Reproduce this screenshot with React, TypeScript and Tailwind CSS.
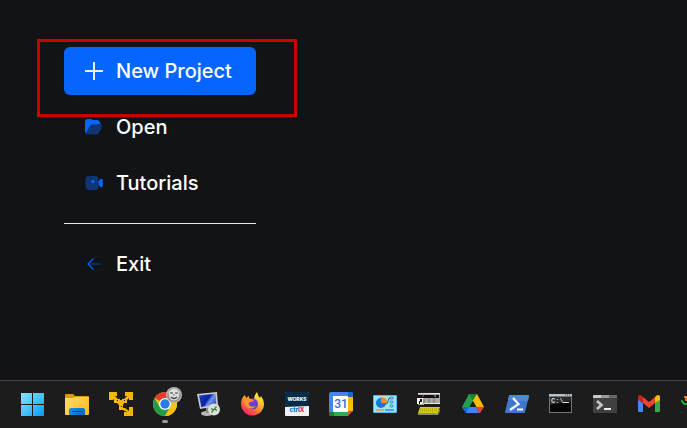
import React from "react";

const iconClass = "size-5 shrink-0";
const appIconClass = "size-6 overflow-visible";

const IconPlus = () => (
  <svg viewBox="0 0 20 20" className={iconClass} fill="none" stroke="#e6f0ff" strokeWidth="2" aria-hidden="true">
    <path d="M1 10h18M10 1v18" />
  </svg>
);

const IconFolder = () => (
  <svg viewBox="0 0 20 20" className={iconClass} aria-hidden="true">
    <path d="M1 5Q1 2 4 2H6.500Q8 2 9 3H13Q16 3 16.500 7.500L9 8L3 17Q1 16 1 14Z" fill="#0566ff" />
    <path d="M8.500 7.500H16.500Q19 7.500 18 10L15.500 15Q14.500 17.500 12 17.500H4Q1.500 17.500 2.500 15L5.500 9.500Q6.500 7.500 8.500 7.500Z" fill="#0f3575" />
  </svg>
);

const IconVideo = () => (
  <svg viewBox="0 0 20 20" className={iconClass} aria-hidden="true">
    <rect x="1.500" y="3" width="13" height="14" rx="3.500" fill="#0f3575" />
    <circle cx="9" cy="8.500" r="1.700" fill="#0566ff" />
    <path d="M14.500 8.200L16.500 6Q18.800 5 18.800 7.500V12.500Q18.800 15 16.500 14L14.500 11.800Z" fill="#0566ff" />
  </svg>
);

const IconArrow = () => (
  <svg viewBox="0 0 20 20" className={iconClass} fill="none" strokeLinecap="round" strokeLinejoin="round" aria-hidden="true">
    <path d="M4.500 10H15.500" stroke="#0b48ad" strokeWidth="1.200" />
    <path d="M9 5l-5 5 5 5" stroke="#0566ff" strokeWidth="1.200" />
  </svg>
);

const StartIcon = () => (
  <svg viewBox="0 0 24 24" className={appIconClass} aria-hidden="true">
    <defs>
      <linearGradient id="start" x1="0" y1="0" x2="24" y2="24" gradientUnits="userSpaceOnUse">
        <stop stopColor="#8fe3ff" />
        <stop offset="0.500" stopColor="#45c5fb" />
        <stop offset="1" stopColor="#0894f5" />
      </linearGradient>
    </defs>
    <path d="M0 1h11v11H0zM12 1h11v11H12zM0 13h11v11H0zM12 13h11v11H12z" fill="url(#start)" />
  </svg>
);

const ExplorerIcon = () => (
  <svg viewBox="0 0 24 24" className={appIconClass} aria-hidden="true">
    <defs>
      <linearGradient id="folder" x1="0" y1="4" x2="24" y2="23" gradientUnits="userSpaceOnUse">
        <stop stopColor="#ffdc74" />
        <stop offset="1" stopColor="#fdb916" />
      </linearGradient>
      <linearGradient id="tray" x1="4" y1="16" x2="20" y2="23" gradientUnits="userSpaceOnUse">
        <stop stopColor="#1a92e4" />
        <stop offset="1" stopColor="#0767bd" />
      </linearGradient>
    </defs>
    <path d="M0 3q0-1 1-1h7l2 2h13q1 0 1 1v4H0z" fill="#d99a0c" />
    <path d="M0 6h8l2-1h14v17q0 1-1 1H1q-1 0-1-1z" fill="url(#folder)" />
    <path d="M4 23v-5q0-2 2-2h12q2 0 2 2v5z" fill="url(#tray)" />
    <path d="M7 19h10v1H7z" fill="#074a8d" />
  </svg>
);

const ArrowsIcon = () => (
  <svg viewBox="0 0 24 24" className={appIconClass} fill="#f5b50a" aria-hidden="true">
    <path d="M0 0h8v4H6l3 3h6l3-3h-2V0h8v8h-4V6l-2 2v3h-3l-1 2v3h2l4 3v-4h4v9h-9v-4h3l-4-2h-4v-5l-2-2H5V8L4 7v1H0z" />
    <path d="M11 6h2v2h-2zM8 8h1v1H8zM15 8h1v1h-1zM12 14h1v1h-1z" fill="#1c1c1c" />
  </svg>
);

const ChromeIcon = () => (
  <svg viewBox="0 0 24 24" className={appIconClass} aria-hidden="true">
    <circle cx="12" cy="12" r="12" fill="#fbc116" />
    <path d="M12 12L1.600 6A12 12 0 0 1 22.400 6H12z" fill="#e33b2e" />
    <path d="M1.600 6A12 12 0 0 0 12 24l5.200-9L12 12 6.800 15z" fill="#229c4b" />
    <path d="M12 6h10.400A12 12 0 0 1 12 24l5.200-9z" fill="#fbc116" />
    <circle cx="12" cy="12" r="6" fill="#fff" />
    <circle cx="12" cy="12" r="4.700" fill="#267be8" />
    <circle cx="21" cy="3" r="8" fill="#b5b5b1" />
    <circle cx="21" cy="3" r="6.800" fill="#8f8f8b" />
    <path d="M15.500 0q5.500-7 11 0l-1 6q-4.500 5-9 0z" fill="#dededa" />
    <path d="M17 1h3M22 1h3M18 5q3 3 6 0" stroke="#3f3f3d" strokeWidth="1.200" fill="none" />
    <path d="M21 2v2" stroke="#777" />
    <rect x="9" y="28" width="6" height="3" rx="1.500" fill="#9b9b9b" />
  </svg>
);

const RemoteIcon = () => (
  <svg viewBox="0 0 24 24" className={appIconClass} aria-hidden="true">
    <defs>
      <linearGradient id="screen" x1="3" y1="3" x2="19" y2="14" gradientUnits="userSpaceOnUse">
        <stop stopColor="#173fc0" />
        <stop offset="0.450" stopColor="#0a20a0" />
        <stop offset="0.600" stopColor="#7095ed" />
        <stop offset="1" stopColor="#1740c4" />
      </linearGradient>
    </defs>
    <ellipse cx="10" cy="21.500" rx="6" ry="2.500" fill="#b9bbb8" />
    <path d="M9 15h5v6H9z" fill="#8b8d8b" />
    <path d="M0 2L20 0l1 14L3 17z" fill="#c6cac9" />
    <path d="M2 3.500L18.500 1.700l.7 11L4.300 15z" fill="url(#screen)" />
    <circle cx="17" cy="17.500" r="6" fill="#deded9" />
    <path d="M14 16.500l2.500 1.500-2 2.500M19.500 14.500l-2 2.500 2.500 1.500" stroke="#37854a" strokeWidth="1.400" fill="none" />
  </svg>
);

const FirefoxIcon = () => (
  <svg viewBox="0 0 24 24" className={appIconClass} aria-hidden="true">
    <defs>
      <linearGradient id="fire" x1="19" y1="2" x2="5" y2="22" gradientUnits="userSpaceOnUse">
        <stop stopColor="#fff044" />
        <stop offset="0.400" stopColor="#ffb02a" />
        <stop offset="0.700" stopColor="#ff6737" />
        <stop offset="1" stopColor="#f52269" />
      </linearGradient>
      <linearGradient id="globe" x1="8" y1="6" x2="15" y2="17" gradientUnits="userSpaceOnUse">
        <stop stopColor="#8a3fdc" />
        <stop offset="1" stopColor="#5741be" />
      </linearGradient>
    </defs>
    <path d="M4 3l1 3 3-2v3h5q0-4 3-7 1 4 3 6l1-2q3 4 3 8a11.500 11.500 0 0 1-23 0Q0 6 4 3z" fill="url(#fire)" />
    <circle cx="11.500" cy="12" r="5.500" fill="url(#globe)" />
    <path d="M3 7q4-2 7 0l3 1q-1 2-4 2-2 1-1 3 2 3 7 1-4 5-9 1-4-3-3-8z" fill="#ff9330" />
  </svg>
);

const WorksIcon = () => (
  <svg viewBox="0 0 24 24" className={appIconClass} fontFamily="Inter, sans-serif" fontWeight="800" textAnchor="middle">
    <rect width="24" height="24" rx="1" fill="#eef2f6" />
    <path d="M1 0h22q1 0 1 1v13L0 15V1q0-1 1-1z" fill="#052d4a" />
    <text x="12" y="9" fontSize="5" fill="#fff">WORKS</text>
    <text x="12" y="20" fontSize="6" fill="#1766a4">ctrl<tspan fill="#db3044">X</tspan></text>
  </svg>
);

const CalendarIcon = () => (
  <svg viewBox="0 0 24 24" className={appIconClass}>
    <path d="M2 0h20q2 0 2 2v18l-4 4H2q-2 0-2-2V2q0-2 2-2z" fill="#4285f4" />
    <path d="M19 0h3q2 0 2 2v3h-5z" fill="#1967d2" />
    <path d="M19 5h5v14h-5z" fill="#fbbc04" />
    <path d="M5 20h14v4H5z" fill="#34a853" />
    <path d="M0 20h5v4H2q-2 0-2-2z" fill="#188038" />
    <path d="M24 19h-5v5z" fill="#ea4335" />
    <path d="M24 19v5h-5z" fill="#1c1c1c" />
    <path d="M4 4h15v16H4z" fill="#fff" />
    <text x="12" y="16" fontSize="12" fontFamily="Roboto, sans-serif" fontWeight="500" textAnchor="middle" fill="#2b70dc">31</text>
  </svg>
);

const ControlPanelIcon = () => (
  <svg viewBox="0 0 24 24" className={appIconClass} aria-hidden="true">
    <rect y="3" width="24" height="18" rx="1" fill="#51b8e9" />
    <path d="M1 4h22v16H1z" fill="#9ee2fb" />
    <circle cx="8" cy="11" r="5" fill="#1679ca" />
    <path d="M8 11V5q6 0 6 6z" fill="#f58b19" />
    <path d="M13 12q2 0 2-3t3-3" stroke="#14649f" fill="none" />
    <g fill="#eefaff" stroke="#277cb9">
      <rect x="17" y="5" width="3" height="2" rx="1" />
      <rect x="17" y="9" width="3" height="2" rx="1" />
      <rect x="17" y="13" width="3" height="2" rx="1" />
    </g>
    <path d="M3 18h8" stroke="#f58b19" strokeWidth="1.200" />
    <path d="M12 18h9" stroke="#1679ca" strokeWidth="1.200" />
  </svg>
);

const ConsoleIcon = () => (
  <svg viewBox="0 0 24 24" className={appIconClass} aria-hidden="true">
    <path d="M1 1h22v10H7v2H1z" fill="#a9a9a9" />
    <path d="M1 1h22v1H1z" fill="#e4e4e4" />
    <path d="M1 3h21v3H1z" fill="#101010" />
    <path d="M5 3h2v2H5z" fill="#8b2020" />
    <path d="M17 3h2v2h-2z" fill="#3f7c47" />
    <path d="M0 6h6v6H0z" fill="#f4f4f4" />
    <path d="M2 9h1V7h2v3H3v2H2z" fill="#111" />
    <path d="M7 7v4M12 6v5M17 6v5" stroke="#6a6a6a" />
    <path d="M7 11h16v1H7z" fill="#e8e8e8" />
    <path d="M3 15h20l-2 6H1z" fill="#d8cf13" />
    <path d="M3 17h19M3 19h18" stroke="#948d08" strokeDasharray="1 1" />
    <path d="M1 21h20l2-4v2l-2 4H1z" fill="#8b8b86" />
  </svg>
);

const DriveIcon = () => (
  <svg viewBox="0 0 24 24" className={appIconClass} aria-hidden="true">
    <path d="M8 2h8l-4 7-7 12-4-6z" fill="#22a34a" />
    <path d="M8 2h8l-4 7z" fill="#15823a" />
    <path d="M16 2l7 13h-8l-3.500-6z" fill="#fbbc04" />
    <path d="M1 15h7l-3 6z" fill="#1967d2" />
    <path d="M8 15h7l3 6H5z" fill="#3e86f5" />
    <path d="M15 15h8l-4 6h-1z" fill="#ea4335" />
    <path d="M12 9l-3.500 6h7z" fill="#1c1c1c" />
  </svg>
);

const PowerShellIcon = () => (
  <svg viewBox="0 0 24 24" className={appIconClass} aria-hidden="true">
    <path d="M5 3h18q1 0 1 1l-4 16q0 1-1 1H1q-1 0-1-1L4 4q0-1 1-1z" fill="#3e76d0" />
    <path d="M5 3h18q1 0 1 1l-1 5L3 8l1-4q0-1 1-1z" fill="#4f87dc" />
    <path d="M8 6l5.500 6L5 18M12 17.500h6" stroke="#fff" strokeWidth="2.200" fill="none" />
  </svg>
);

const CmdIcon = () => (
  <svg viewBox="0 0 24 24" className={appIconClass}>
    <path d="M0 2h23v19H0z" fill="#737779" />
    <path d="M0 2h23v2H0z" fill="#b8c1c8" />
    <path d="M1 5h21v15H1z" fill="#050505" />
    <path d="M1 5h21v4L1 13z" fill="#292929" />
    <path d="M16 3h1M18 3h1M20 3h1" stroke="#444" />
    <text x="2" y="11" fontSize="7" fontFamily="Liberation Mono, monospace" fontWeight="700" fill="#ddd">C:\</text>
    <path d="M14 10.500h6" stroke="#ddd" />
  </svg>
);

const TerminalIcon = () => (
  <svg viewBox="0 0 24 24" className={appIconClass} aria-hidden="true">
    <rect y="3" width="24" height="18" rx="1" fill="#404040" />
    <path d="M1 3h7v3H0V4q0-1 1-1z" fill="#cacaca" />
    <path d="M8 3h8v3H8z" fill="#999" />
    <path d="M16 3h7q1 0 1 1v2h-8z" fill="#686868" />
    <path d="M4 9l4.500 4L4 17" stroke="#c7c7c7" strokeWidth="2.600" fill="none" />
    <path d="M11 17h7" stroke="#ededed" strokeWidth="2" />
  </svg>
);

const GmailIcon = () => (
  <svg viewBox="0 0 24 24" className={appIconClass} aria-hidden="true">
    <path d="M1 7l5 4v9H2q-1 0-1-1z" fill="#4285f4" />
    <path d="M18 11l5-4v12q0 1-1 1h-4z" fill="#34a853" />
    <path d="M6 5l6 5 6-5v6l-6 5-6-5z" fill="#ea4335" />
    <path d="M1 7V5q0-2 2-2 1 0 3 2v6L1 8z" fill="#c5221f" />
    <path d="M18 5q2-2 3-2 2 0 2 2v3l-5 3z" fill="#fbbc04" />
  </svg>
);

const CodeIcon = () => (
  <svg viewBox="0 0 24 24" className={appIconClass} fill="none" aria-hidden="true">
    <path d="M3 5h11M5 5v4" stroke="#ff9b16" strokeWidth="1.500" />
    <path d="M0 9h1l2 3h3" stroke="#13d931" strokeWidth="1.500" />
    <path d="M0 20.500h1" stroke="#087b1a" />
  </svg>
);

const menuClass = "flex h-12 w-full cursor-pointer items-center gap-3 rounded-md px-5 text-left text-xl font-medium";

const App: React.FC = () => {
  const actions = [
    { id: 1, title: "Open", icon: <IconFolder /> },
    { id: 2, title: "Tutorials", icon: <IconVideo /> },
  ];

  const apps = [
    { title: "Start", icon: <StartIcon /> },
    { title: "File Explorer", icon: <ExplorerIcon /> },
    { title: "Virtual Machines", icon: <ArrowsIcon /> },
    { title: "Google Chrome", icon: <ChromeIcon /> },
    { title: "Remote Desktop", icon: <RemoteIcon /> },
    { title: "Firefox", icon: <FirefoxIcon /> },
    { title: "ctrlX Works", icon: <WorksIcon /> },
    { title: "Google Calendar", icon: <CalendarIcon /> },
    { title: "Control Panel", icon: <ControlPanelIcon /> },
    { title: "Serial Console", icon: <ConsoleIcon /> },
    { title: "Google Drive", icon: <DriveIcon /> },
    { title: "PowerShell", icon: <PowerShellIcon /> },
    { title: "Command Prompt", icon: <CmdIcon /> },
    { title: "Terminal", icon: <TerminalIcon /> },
    { title: "Gmail", icon: <GmailIcon /> },
    { title: "Code Tool", icon: <CodeIcon /> },
  ];

  return (
    <div className="flex min-h-screen flex-col overflow-hidden bg-[#121317] font-['Inter',sans-serif] text-white">
      <main className="flex-1 px-16 pt-[47px] pb-8">
        <nav className="flex w-48 flex-col gap-2">
          <div className="relative">
            <button type="button" className={`${menuClass} bg-[#0566ff]`}>
              <IconPlus />
              New Project
            </button>
            <div className="pointer-events-none absolute -top-2 -right-[41px] -bottom-[22px] -left-[27px] border-3 border-[#cc0000]" />
          </div>
          {actions.map((action) => (
            <button type="button" className={menuClass} key={action.id}>
              {action.icon}
              {action.title}
            </button>
          ))}
          <hr className="my-2 border-gray-200" />
          <button type="button" className={menuClass}>
            <IconArrow />
            Exit
          </button>
        </nav>
      </main>

      <footer className="flex h-12 overflow-hidden border-t border-[#414141] bg-[#1c1c1c] pb-px pl-[11px]">
        {apps.map((app) => (
          <button
            type="button"
            className="flex w-11 shrink-0 cursor-pointer items-center justify-center"
            aria-label={app.title}
            key={app.title}
          >
            {app.icon}
          </button>
        ))}
      </footer>
    </div>
  );
};

export default App;
